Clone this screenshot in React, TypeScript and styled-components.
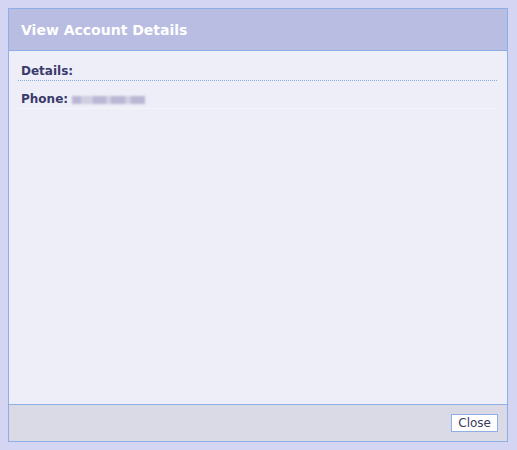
import { FunctionComponent } from "react";
import styled, { createGlobalStyle } from "styled-components";

const Global = createGlobalStyle`
    html, body {
        margin: 0;
        background-color: #d4d5f2;
    }
    body {
        padding: 8px;
        font-family: "DejaVu Sans", Verdana, sans-serif;
    }
`

const App: FunctionComponent = () => {
    return (
        <>
            <Global />
            <Dialog>
                <Header>
                    <h1>View Account Details</h1>
                </Header>
                <Content>
                    <Section>
                        <h2>Details:</h2>
                    </Section>
                    <Row>
                        <Label>Phone:</Label>
                        <Blurred>
                            <Blob w={9} />
                            <Blob w={12} light />
                            <Blob w={13} />
                            <Blob w={5} light />
                            <Blob w={14} />
                            <Blob w={6} light />
                            <Blob w={14} />
                        </Blurred>
                    </Row>
                </Content>
                <Footer>
                    <Button>Close</Button>
                </Footer>
            </Dialog>
        </>
    );
}

const Dialog = styled.div`
    width: 498px;
    height: 432px;
    border: 1px solid #8eaee6;
    display: flex;
    flex-direction: column;
    background-color: #eeeef8;
`
const Header = styled.div`
    height: 41px;
    background-color: #b9bde2;
    border-bottom: 1px solid #8eaee6;
    display: flex;
    align-items: center;
    padding-left: 12px;
    &>h1{
        margin: 0;
        font-size: 14px;
        font-weight: 700;
        color: #ffffff;
    }
`
const Content = styled.div`
    flex: 1;
    padding: 13px 10px 0 9px;
`
const Section = styled.div`
    border-bottom: 1px dotted #86aee0;
    padding-bottom: 2px;
    &>h2{
        margin: 0;
        font-size: 12px;
        font-weight: 700;
        color: #3a3a6c;
        padding-left: 3px;
    }
`
const Row = styled.div`
    display: flex;
    align-items: center;
    gap: 4px;
    padding: 11px 0 2px 3px;
    border-bottom: 1px solid #f4f4fb;
`
const Label = styled.span`
    font-size: 12px;
    font-weight: 700;
    color: #3a3a6c;
`
const Blurred = styled.span`
    display: flex;
    align-items: center;
    filter: blur(0.8px);
    margin-top: 1px;
`
const Blob = styled.span<{ w: number; light?: boolean }>`
    display: inline-block;
    width: ${p => p.w}px;
    height: 8px;
    background-color: ${p => p.light ? "#cfcee2" : "#b9b7d3"};
`
const Footer = styled.div`
    height: 36px;
    background-color: #dadae7;
    border-top: 1px solid #8eaee6;
    display: flex;
    justify-content: flex-end;
    align-items: center;
    padding-right: 9px;
`
const Button = styled.button`
    font-family: "DejaVu Sans", Verdana, sans-serif;
    font-size: 12px;
    color: #3a3a5c;
    background-color: #ffffff;
    border: 1px solid #8eaee6;
    padding: 1px 6px;
    height: 18px;
    line-height: 14px;
    border-radius: 0;
    margin-top: 0;
`
export default App;
